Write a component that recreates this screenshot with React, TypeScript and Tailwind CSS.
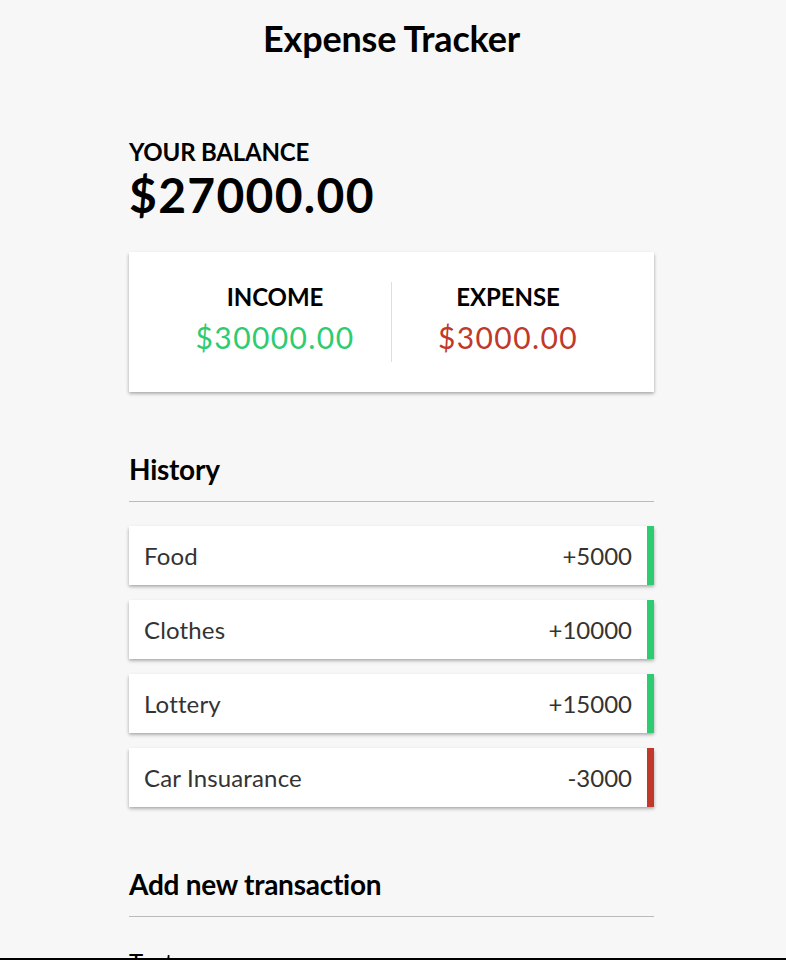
import React from 'react';

interface Transaction {
  id: number;
  text: string;
  amount: number;
}

const transactions: Transaction[] = [
  { id: 1, text: 'Food', amount: 5000 },
  { id: 2, text: 'Clothes', amount: 10000 },
  { id: 3, text: 'Lottery', amount: 15000 },
  { id: 4, text: 'Car Insuarance', amount: -3000 },
];

const shadow =
  'shadow-[0_1.5px_4.5px_rgba(0,0,0,0.12),0_1.5px_3px_rgba(0,0,0,0.24)]';

function Balance({ total }: { total: number }) {
  return (
    <div>
      <h4 className="text-[24px] leading-[29px] font-bold tracking-[-0.2px] uppercase">Your Balance</h4>
      <h1 className="text-[48px] leading-[58px] font-bold tracking-[1.3px]">
        ${total.toFixed(2)}
      </h1>
    </div>
  );
}

function IncomeExpenses({ income, expense }: { income: number; expense: number }) {
  return (
    <div className={`mt-[28px] flex bg-white p-[30px] ${shadow}`}>
      <div className="flex-1 border-r border-[#dedede] text-center">
        <h4 className="text-[24px] leading-[29px] font-bold tracking-[-0.1px] uppercase">Income</h4>
        <p className="my-[7.5px] text-[30px] leading-[36px] tracking-[1.4px] text-[#2ecc71]">
          ${income.toFixed(2)}
        </p>
      </div>
      <div className="flex-1 text-center">
        <h4 className="text-[24px] leading-[29px] font-bold tracking-[-0.1px] uppercase">Expense</h4>
        <p className="my-[7.5px] text-[30px] leading-[36px] tracking-[1.4px] text-[#c0392b]">
          ${expense.toFixed(2)}
        </p>
      </div>
    </div>
  );
}

function TransactionItem({ t }: { t: Transaction }) {
  const sign = t.amount < 0 ? '-' : '+';
  return (
    <li
      className={`flex justify-between bg-white p-[15px] text-[24px] leading-[29px] text-[#333] ${shadow} ${
        t.amount < 0 ? 'border-r-[7.5px] border-[#c0392b]' : 'border-r-[7.5px] border-[#2ecc71]'
      }`}
    >
      <span className="tracking-[0.15px]">{t.text}</span>
      <span>
        {sign}
        {Math.abs(t.amount)}
      </span>
    </li>
  );
}

export default function App() {
  const amounts = transactions.map((t) => t.amount);
  const total = amounts.reduce((a, b) => a + b, 0);
  const income = amounts.filter((a) => a > 0).reduce((a, b) => a + b, 0);
  const expense = Math.abs(amounts.filter((a) => a < 0).reduce((a, b) => a + b, 0));

  return (
    <div className="relative h-screen overflow-hidden bg-[#f7f7f7] pr-[3px] text-black [font-family:Lato,'Liberation_Sans',sans-serif]">
      <h2 className="pt-[17px] text-center text-[36px] leading-[43px] font-bold tracking-[-0.2px]">
        Expense Tracker
      </h2>
      <div className="mx-auto mt-[77px] w-[525px]">
        <Balance total={total} />
        <IncomeExpenses income={income} expense={expense} />

        <h3 className="mt-[60px] border-b border-[#bbb] pb-[15px] text-[28px] leading-[34px] font-bold tracking-[-0.25px]">
          History
        </h3>
        <ul className="mt-[24px] mb-[60px] flex flex-col gap-[15px]">
          {transactions.map((t) => (
            <TransactionItem key={t.id} t={t} />
          ))}
        </ul>

        <h3 className="border-b border-[#bbb] pb-[15px] text-[28px] leading-[34px] font-bold tracking-[-0.25px]">
          Add new transaction
        </h3>
        <form className="mt-[15px]">
          <div>
            <label className="my-[15px] inline-block text-[24px] leading-[29px]">Text</label>
            <input
              type="text"
              placeholder="Enter text..."
              className="block w-full border border-[#dedede] bg-white p-[15px] text-[24px]"
            />
          </div>
        </form>
      </div>
      <div className="fixed bottom-0 left-0 h-[2px] w-full bg-black" />
    </div>
  );
}
